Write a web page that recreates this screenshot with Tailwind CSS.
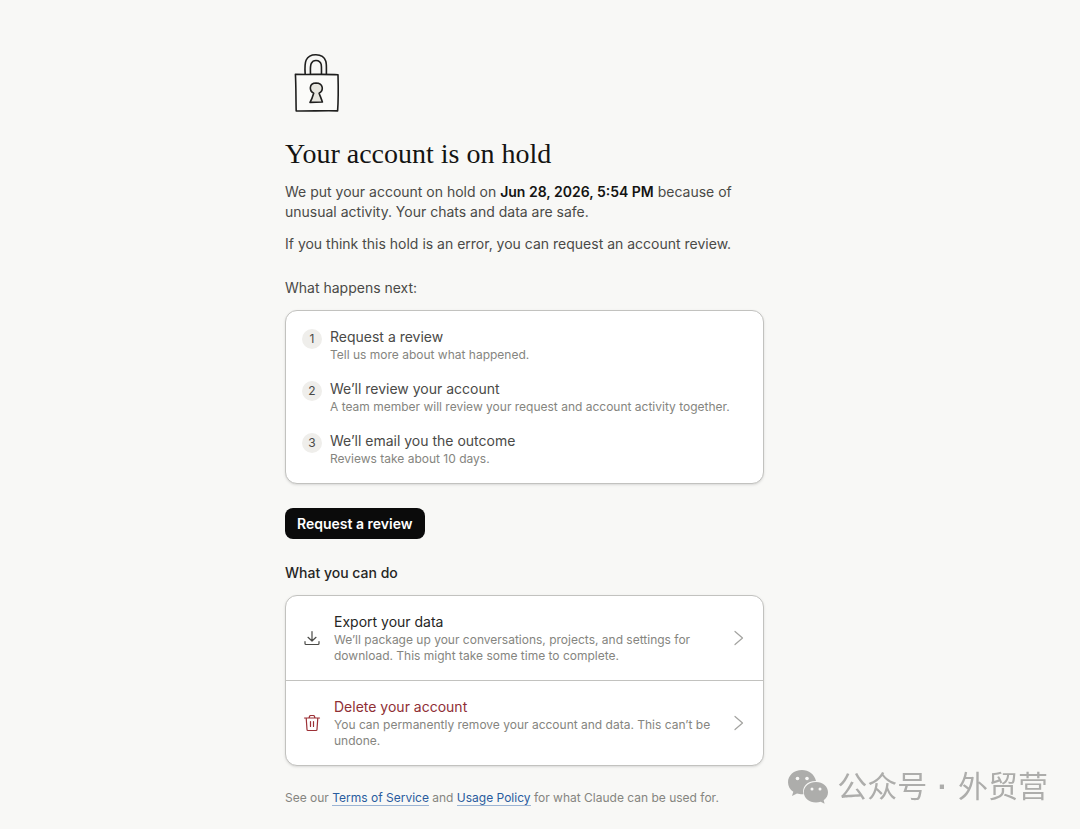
<!DOCTYPE html>
<html lang="en">
<head>
    <meta charset="UTF-8">
    <meta name="viewport" content="width=device-width, initial-scale=1.0">
    <title>Your account is on hold</title>
    <script src="https://cdn.jsdelivr.net/npm/@tailwindcss/browser@4"></script>
</head>
<body class="bg-[#f8f8f6] min-h-screen font-['Inter','Liberation_Sans',sans-serif] text-sm leading-5 text-[#4a4a47]">
    <div class="pr-[31px] pt-[50px] pb-6">
        <main class="mx-auto w-full max-w-[479px]">
            <!-- Padlock -->
            <svg class="w-16 h-16" viewBox="0 0 64 64" fill="none" stroke="#1f1f1e" stroke-width="1.6" stroke-linecap="round" stroke-linejoin="round" aria-hidden="true">
                <path d="M20.200 24.400C19.800 19 19.500 13.500 21.200 10C23 6.300 26.800 4.700 31 4.800C35.500 4.900 39.500 7.400 40.800 11.200C41.800 14.500 41.300 20 41.400 24.400"/>
                <path d="M25.500 24.300C25.400 20 25 16 26.300 13.400C27.400 11.200 29.300 10.400 31.200 10.500C33.700 10.600 35.500 12 36.200 14.400C36.700 17 36.400 21 36.500 24.300"/>
                <path d="M10.400 24.300C24 24.800 40 23.900 53 24.800C53.300 36 53.600 48 52.600 60.900C40 60.500 25 61.200 11.200 61C10.800 48 11.100 36 10.400 24.300Z" fill="#fbfbf9"/>
                <path d="M28.700 43.200C23.900 40.700 23.900 33.200 31 33C38.400 33.100 39 40.300 34.100 43.200C35.200 46.200 36.400 49 37.400 52L25 52.400C26.700 49.400 27.800 46.300 28.700 43.200Z" fill="#e6e5de"/>
            </svg>

            <h1 class="mt-6 text-[28px] leading-8 font-medium font-['Liberation_Serif',serif] text-[#141413]">Your account is on hold</h1>
            <p class="mt-3">We put your account on hold on <strong class="font-semibold text-[#141413]">Jun 28, 2026, 5:54 PM</strong> because of unusual activity. Your chats and data are safe.</p>
            <p class="mt-3">If you think this hold is an error, you can request an account review.</p>

            <p class="mt-6">What happens next:</p>
            <ol class="mt-3 flex flex-col gap-4 rounded-xl border border-[#c2c2bf] bg-white p-4 shadow-sm">
                <li class="flex gap-2">
                    <span class="mt-[2px] flex size-5 shrink-0 items-center justify-center rounded-full bg-[#efeeeb] text-xs">1</span>
                    <div>
                        <h2>Request a review</h2>
                        <p class="text-xs text-[#858580]">Tell us more about what happened.</p>
                    </div>
                </li>
                <li class="flex gap-2">
                    <span class="mt-[2px] flex size-5 shrink-0 items-center justify-center rounded-full bg-[#efeeeb] text-xs">2</span>
                    <div>
                        <h2>We’ll review your account</h2>
                        <p class="text-xs text-[#858580]">A team member will review your request and account activity together.</p>
                    </div>
                </li>
                <li class="flex gap-2">
                    <span class="mt-[2px] flex size-5 shrink-0 items-center justify-center rounded-full bg-[#efeeeb] text-xs">3</span>
                    <div>
                        <h2>We’ll email you the outcome</h2>
                        <p class="text-xs text-[#858580]">Reviews take about 10 days.</p>
                    </div>
                </li>
            </ol>

            <button type="button" class="mt-6 block h-[31px] rounded-lg bg-[#0b0b0b] px-3 font-semibold text-white">Request a review</button>

            <h2 class="mt-6 font-medium text-[#262624]">What you can do</h2>
            <div class="mt-3 divide-y divide-[#c2c2bf] rounded-xl border border-[#c2c2bf] bg-white shadow-sm">
                <a href="#export" class="flex items-center gap-3 px-4 py-4">
                    <svg class="size-5 shrink-0" viewBox="0 0 20 20" fill="none" stroke="#4a4a47" stroke-width="1.2" stroke-linecap="round" stroke-linejoin="round" aria-hidden="true">
                        <path d="M10 3.500V13M6 9.300L10 13L14 9.300M3 13.500V15.500A1 1 0 0 0 4 16.500H16A1 1 0 0 0 17 15.500V13.500"/>
                    </svg>
                    <div class="flex-1">
                        <h3 class="text-[#262624]">Export your data</h3>
                        <p class="text-xs text-[#858580]">We’ll package up your conversations, projects, and settings for download. This might take some time to complete.</p>
                    </div>
                    <svg class="size-4 shrink-0" viewBox="0 0 16 16" fill="none" stroke="#a3a3a0" stroke-width="1.2" stroke-linecap="round" stroke-linejoin="round" aria-hidden="true">
                        <path d="M4 1.500L11.500 8L4 14.500"/>
                    </svg>
                </a>
                <a href="#delete" class="flex items-center gap-3 px-4 py-4">
                    <svg class="size-5 shrink-0" viewBox="0 0 20 20" fill="none" stroke="#9c3036" stroke-width="1.2" stroke-linecap="round" stroke-linejoin="round" aria-hidden="true">
                        <path d="M2.500 5H17.500M7 5L7.600 3.200A1 1 0 0 1 8.500 2.500H11.500A1 1 0 0 1 12.400 3.200L13 5M4.200 5L5 16.500A1 1 0 0 0 6 17.500H14A1 1 0 0 0 15 16.500L15.800 5M8.500 8.500V13.500M11.500 8.500V13.500"/>
                    </svg>
                    <div class="flex-1">
                        <h3 class="text-[#8f2f35]">Delete your account</h3>
                        <p class="text-xs text-[#858580]">You can permanently remove your account and data. This can’t be undone.</p>
                    </div>
                    <svg class="size-4 shrink-0" viewBox="0 0 16 16" fill="none" stroke="#a3a3a0" stroke-width="1.2" stroke-linecap="round" stroke-linejoin="round" aria-hidden="true">
                        <path d="M4 1.500L11.500 8L4 14.500"/>
                    </svg>
                </a>
            </div>

            <p class="mt-6 text-xs text-[#858580]">See our <a href="#terms" class="border-b border-[#9bb4d4] text-[#2a5c9e]">Terms of Service</a> and <a href="#usage" class="border-b border-[#9bb4d4] text-[#2a5c9e]">Usage Policy</a> for what Claude can be used for.</p>
        </main>
    </div>

    <!-- Channel mark in the corner -->
    <div class="fixed right-8 bottom-6 flex items-center gap-2 text-[#adadab]">
        <svg class="w-[42px] h-9" viewBox="0 0 42 36" fill="currentColor" aria-hidden="true">
            <path d="M15 1C6.800 1 1 6.500 1 13.200C1 17.200 3 20.500 6.300 22.700L5 27L10 24.500C11.800 25.100 13.800 25.400 16.500 25.300C14.500 18 20 11.800 29 11.900C27.500 5.300 21.800 1 15 1Z"/>
            <path d="M29 13C22 13 16.800 17.600 16.800 23.300C16.800 29 22 33.500 29 33.500C30.600 33.500 32.300 33.200 33.700 32.700L37.600 34.800L36.700 31.200C39.500 29.300 41 26.500 41 23.300C41 17.600 36 13 29 13Z"/>
            <g fill="#f8f8f6">
                <circle cx="10.500" cy="9.500" r="1.800"/>
                <circle cx="20" cy="9.500" r="1.800"/>
                <circle cx="25" cy="20" r="1.500"/>
                <circle cx="33" cy="20" r="1.500"/>
            </g>
        </svg>
        <p lang="zh-CN" class="font-['Liberation_Sans','Noto_Sans_CJK_SC',sans-serif] text-[30px] leading-9">公众号<span class="px-[2px] font-bold"> · </span>外贸营</p>
    </div>
</body>
</html>
